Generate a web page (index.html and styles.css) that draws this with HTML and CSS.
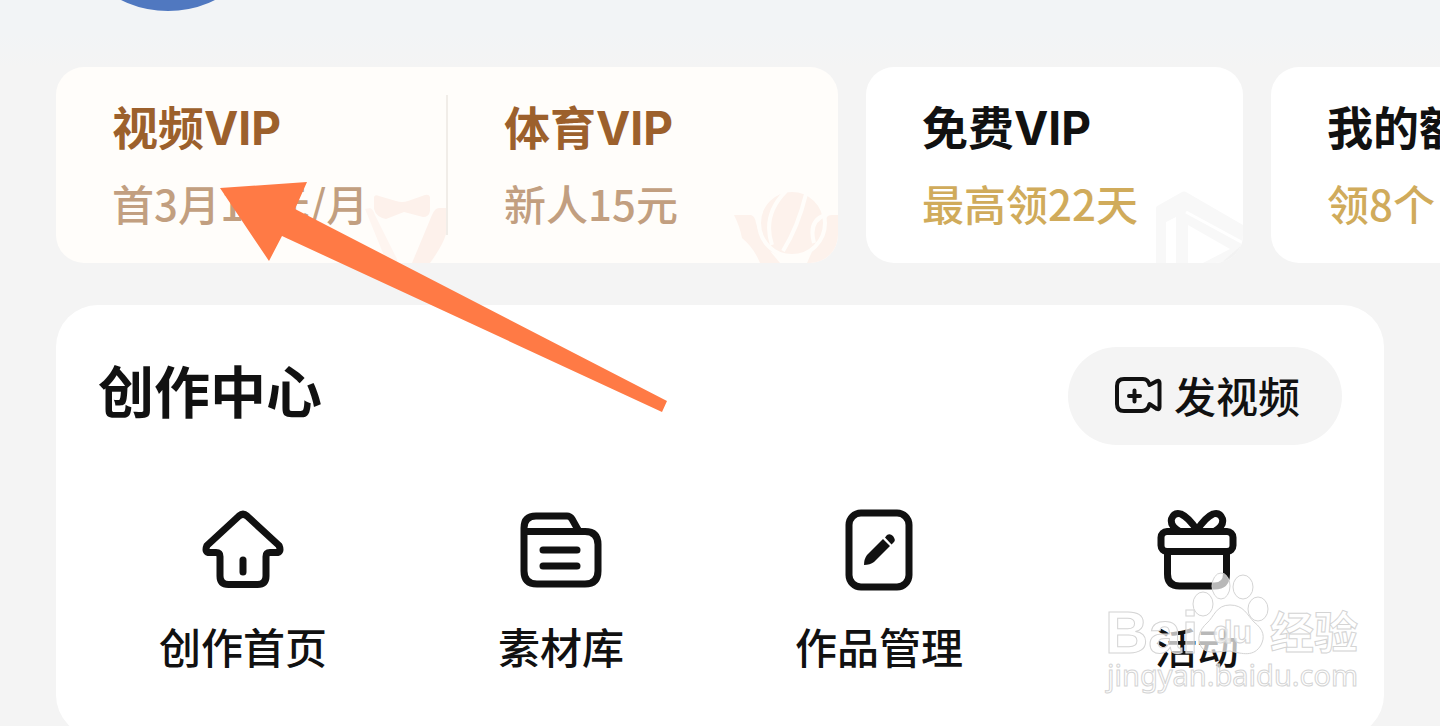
FILE: index.html
```html
<!DOCTYPE html>
<html lang="zh-CN">
<head>
	<meta charset="utf-8">
	<meta name="viewport" content="width=device-width, initial-scale=1">
	<title>个人中心</title>
	<link rel="stylesheet" href="styles.css">
</head>
<body>

	<div class="header">
		<div class="avatar"></div>
	</div>

	<!-- 会员卡片，可横向滑动 -->
	<div class="vip-list">
		<div class="vip-card vip-card-gold">
			<a href="#" class="vip-item">
				<span class="vip-title">视频VIP</span>
				<span class="vip-desc">首3月15元/月</span>
				<svg class="vip-bg" width="84" height="72" viewBox="20 0 84 72">
					<path fill="#fdf1eb" d="M32 6Q33 3 37 5L54 10Q60 12 66 10L83 4Q87 3 88 6L88 20Q87 26 81 26L62 21L44 28Q34 26 32 18Z"/>
					<path fill="#fef5f0" d="M23 18L28 17Q31 18 33 24L55 68Q56 72 53 72H45Z"/>
					<path fill="#fdf1eb" d="M70 72L90 24Q93 17 97 17H104V43Q101 54 88 72Z"/>
				</svg>
			</a>
			<div class="vip-line"></div>
			<a href="#" class="vip-item">
				<span class="vip-title">体育VIP</span>
				<span class="vip-desc">新人15元</span>
				<svg class="vip-bg" width="104" height="72" viewBox="0 0 104 72">
					<path fill="#fdf2ec" d="M0 24H17Q21 25 22 32Q27 52 42 60Q58 68 74 58Q88 47 92 28Q93 24 98 24H104V48Q100 66 88 72H26Q20 57 8 47Q6 36 0 24Z"/>
					<path fill="#fffdfa" d="M36 60Q58 73 80 56L73 72H46Z"/>
					<circle cx="58" cy="32" r="33" fill="#fdf2ec" stroke="#fffdfa" stroke-width="4"/>
					<path fill="none" stroke="#fffdfa" stroke-width="4" d="M52 0Q28 24 38 54M72 3Q64 36 49 60M91 24Q74 30 80 52"/>
				</svg>
			</a>
		</div>
		<div class="vip-card">
			<a href="#" class="vip-item">
				<span class="vip-title">免费VIP</span>
				<span class="vip-desc">最高领22天</span>
				<svg class="vip-bg" width="88" height="72" viewBox="0 0 88 72">
					<path fill="#f8f8f8" d="M1 72V17Q1 15 4 14L27 1Q29 0 31 1L88 34V72Z"/>
					<path fill="#fff" d="M11 72V31L21 26V72ZM33 72V34L75 58L48 72Z"/>
					<path fill="none" stroke="#fff" stroke-width="3" d="M31 21L88 52"/>
					<path fill="#f2f2f2" d="M66 72L88 53V72Z"/>
				</svg>
			</a>
		</div>
		<div class="vip-card">
			<a href="#" class="vip-item">
				<span class="vip-title">我的额</span>
				<span class="vip-desc">领8个</span>
			</a>
		</div>
	</div>

	<!-- 创作中心 -->
	<div class="create">
		<div class="create-head">
			<h2 class="create-title">创作中心</h2>
			<button type="button" class="create-btn">
				<svg class="icon" width="48" height="48" viewBox="0 0 48 48" stroke-width="4">
					<path d="M10 7H29Q34 7 35.500 13L43 9Q45.500 8 45.500 11V35Q45.500 38 43 37L35.500 32Q34 39 28 39H10Q3 39 3 32V14Q3 7 10 7Z"/>
					<path d="M20.500 18.500V29.500M15 24H26"/>
				</svg>
				<span>发视频</span>
			</button>
		</div>
		<div class="create-menu">
			<a href="#" class="create-item">
				<svg class="icon" width="96" height="96" viewBox="0 0 96 96" stroke-width="7">
					<path d="M44 14Q48 10.500 52 14L84 43.500Q87 50.500 81 50.500H75Q71 50.500 71 54.500V74Q71 82.500 62.500 82.500H33.500Q25 82.500 25 74V54.500Q25 50.500 21 50.500H15Q9 50.500 12 43.500Z"/>
					<path d="M48 58V70"/>
				</svg>
				创作首页
			</a>
			<a href="#" class="create-item">
				<svg class="icon" width="96" height="96" viewBox="0 0 96 96" stroke-width="7">
					<path d="M11 29.500V26Q11 14 23 14H54Q57 14 59 17L66 29.500H72Q85 29.500 85 42.500V69Q85 82 72 82H24Q11 82 11 69ZM11 29.500H66"/>
					<path d="M30 48H64M30 64H64"/>
				</svg>
				素材库
			</a>
			<a href="#" class="create-item">
				<svg class="icon" width="96" height="96" viewBox="0 0 96 96" stroke-width="7">
					<rect x="18" y="11" width="60" height="74" rx="12"/>
					<path class="icon-fill" d="M33 63Q33 57 36 53L52 37L59 44L43 60Q39 63 33 63ZM54 35.500L56 33Q59 31 62 34Q65 38 63 40L60.500 42.500Z"/>
				</svg>
				作品管理
			</a>
			<a href="#" class="create-item">
				<svg class="icon" width="96" height="96" viewBox="0 0 96 96" stroke-width="7">
					<rect x="12" y="29.500" width="72" height="20" rx="6"/>
					<path d="M18.500 50V72Q18.500 84 30.500 84H65.500Q77.500 84 77.500 72V50"/>
					<path d="M48 28Q39 15 32 12Q25 10 22.500 17Q21 24 30 29M48 28Q57 15 64 12Q71 10 73.500 17Q75 24 66 29"/>
				</svg>
				活动
			</a>
		</div>

		<!-- 水印 -->
		<svg class="watermark" width="264" height="128" viewBox="0 0 264 128">
			<g class="watermark-shape">
				<text class="watermark-bai" x="1" y="81">Bai</text>
				<ellipse cx="117" cy="14" rx="9" ry="13"/>
				<ellipse cx="139" cy="15" rx="10" ry="12"/>
				<ellipse cx="99" cy="32" rx="10" ry="12"/>
				<ellipse cx="154" cy="37" rx="10" ry="12"/>
				<path d="M126 33C140 33 143 43 150 50C160 58 161 65 157 73C150 85 139 82 126 79C114 79 105 83 98 76C92 68 95 58 103 51C110 45 112 33 126 33Z"/>
				<text class="watermark-du" x="109" y="71">du</text>
				<text class="watermark-cn" x="166" y="77">经验</text>
				<text class="watermark-url" x="3" y="114">jingyan.baidu.com</text>
			</g>
		</svg>
	</div>

	<!-- 指示箭头 -->
	<svg class="arrow" width="448" height="230" viewBox="0 0 448 230">
		<path fill="#ff7a45" d="M1 6L88 0L76 27L448 219L443 230L63 54L50 79Z"/>
	</svg>

</body>
</html>
```
FILE: styles.css
```css
* {
	box-sizing: border-box;
}

body {
	position: relative;
	height: 100vh;
	margin: 0;
	overflow: hidden;
	background: #f4f4f4;
	color: #111;
	font-family: "Noto Sans CJK SC", sans-serif;
}

a {
	color: inherit;
	text-decoration: none;
}

.header {
	display: flex;
	align-items: flex-end;
	height: 67px;
	padding: 0 62px 56px;
	background: linear-gradient(#f2f4f6 50%, #f4f4f4);
}

.avatar {
	flex: none;
	width: 212px;
	height: 212px;
	border-radius: 50%;
	background: #5078c0;
}

/* 会员卡片 */
.vip-list {
	display: flex;
	gap: 28px;
	padding-left: 56px;
	overflow: hidden;
}

.vip-card {
	display: flex;
	flex: none;
	min-width: 377px;
	height: 196px;
	border-radius: 28px;
	background: #fff;
	overflow: hidden;
}

.vip-card-gold {
	background: #fffdfa;
}

.vip-item {
	position: relative;
	display: flex;
	flex: 1;
	flex-direction: column;
	gap: 19px;
	padding: 33px 56px 0;
}

.vip-card-gold .vip-item {
	min-width: 390px;
}

.vip-title {
	font-family: Inter, "Noto Sans CJK SC", sans-serif;
	font-size: 46px;
	font-weight: 700;
	line-height: 56px;
	white-space: nowrap;
}

.vip-desc {
	position: relative;
	z-index: 1;
	color: #d0ab5b;
	font-size: 42px;
	font-weight: 500;
	line-height: 56px;
	white-space: nowrap;
}

.vip-card-gold .vip-title {
	color: #9c602c;
}

.vip-card-gold .vip-desc {
	color: #c29f80;
}

.vip-line {
	width: 2px;
	margin: 28px 0;
	background: #f1ede8;
}

.vip-bg {
	position: absolute;
	right: 0;
	bottom: 0;
}

/* 创作中心 */
.create {
	position: relative;
	margin: 42px 56px 0;
	padding: 42px 0 63px;
	border-radius: 42px;
	background: #fff;
}

.create-head {
	display: flex;
	justify-content: space-between;
	padding: 0 42px;
}

.create-title {
	margin: 0;
	font-size: 56px;
	font-weight: 700;
	line-height: 84px;
}

.create-btn {
	display: flex;
	align-items: center;
	gap: 12px;
	height: 98px;
	padding: 0 42px 0 46px;
	border: none;
	border-radius: 49px;
	background: #f4f4f4;
	color: #111;
	font-family: inherit;
	font-size: 42px;
	font-weight: 500;
}

.create-btn span {
	padding-bottom: 4px;
}

.create-menu {
	display: grid;
	grid-template-columns: repeat(4, 1fr);
	margin-top: 57px;
	padding: 0 28px;
}

.create-item {
	display: flex;
	flex-direction: column;
	align-items: center;
	gap: 20px;
	font-size: 42px;
	font-weight: 500;
	line-height: 56px;
}

.icon {
	flex: none;
	fill: none;
	stroke: #111;
	stroke-linecap: round;
	stroke-linejoin: round;
}

.icon-fill {
	fill: #111;
	stroke: none;
}

/* 水印 */
.watermark {
	position: absolute;
	top: 267px;
	right: 16px;
	pointer-events: none;
}

.watermark-shape {
	fill: #fff;
	fill-opacity: 0.7;
	stroke: #d4d4d4;
	stroke-width: 1;
}

.watermark-bai {
	font: 700 60px "Liberation Sans", sans-serif;
}

.watermark-du {
	font: 700 32px "Liberation Sans", sans-serif;
}

.watermark-cn {
	font: 700 44px "Noto Sans CJK SC", sans-serif;
}

.watermark-url {
	font: 400 29px "Noto Sans", sans-serif;
}

.arrow {
	position: absolute;
	z-index: 10;
	top: 182px;
	left: 219px;
	pointer-events: none;
}
```
